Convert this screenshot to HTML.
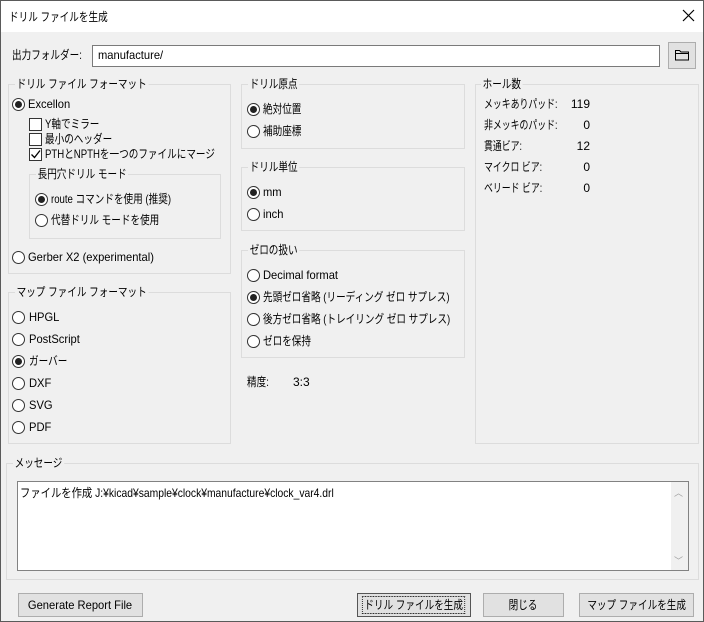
<!DOCTYPE html>
<html><head><meta charset="utf-8"><style>
*{box-sizing:border-box;margin:0;padding:0}
body{width:704px;height:622px;background:#f0f0f0;font-family:"Liberation Sans","Noto Sans CJK JP",sans-serif;font-size:12px;color:#000;position:relative;overflow:hidden;border:1px solid #5a5a5a}
.a{position:absolute;white-space:nowrap;line-height:14px}
.s{transform:scaleX(.8);transform-origin:0 0}
.l{transform:scaleX(.93);transform-origin:0 0}
.title{position:absolute;left:0;top:0;width:702px;height:31px;background:#fff}
.g{position:absolute;border:1px solid #dcdcdc}
.gl{position:absolute;background:#f0f0f0;padding:0 2px;line-height:14px;top:-8px;left:6px;white-space:nowrap;transform:scaleX(.8);transform-origin:0 0}
.r{position:absolute;width:13px;height:13px;border:1px solid #333;border-radius:50%;background:#fff}
.r.on::after{content:"";position:absolute;left:2px;top:2px;width:7px;height:7px;border-radius:50%;background:#222}
.c{position:absolute;width:13px;height:13px;border:1px solid #333;background:#fff}
.btn{position:absolute;height:24px;background:#e1e1e1;border:1px solid #adadad;text-align:center;line-height:22px;white-space:nowrap}
.btn span{display:inline-block;transform:scaleX(.8);margin:0 -30px}
</style></head><body>
<div class="title"></div>
<div class="a s" style="left:8px;top:9px">ドリル ファイルを生成</div>
<svg class="a" style="left:681px;top:8px" width="13" height="13"><path d="M1 1L12 12M12 1L1 12" stroke="#000" stroke-width="1.2"/></svg>

<div class="a s" style="left:11px;top:47px">出力フォルダー:</div>
<div style="position:absolute;left:91px;top:44px;width:568px;height:22px;background:#fff;border:1px solid #7a7a7a"></div>
<div class="a l" style="left:97px;top:47px">manufacture/</div>
<div class="btn" style="left:667px;top:41px;width:28px;height:27px"></div>
<svg class="a" style="left:673px;top:47px" width="16" height="14"><path d="M1.5 2.5h4l1.5 1.5h7.5v8h-13z M1.5 5.5h13" fill="none" stroke="#000"/></svg>

<div class="g" style="left:7px;top:83px;width:223px;height:190px"><div class="gl">ドリル ファイル フォーマット</div></div>
<div class="r on" style="left:11px;top:97px"></div><div class="a l" style="left:27px;top:96px">Excellon</div>
<div class="c" style="left:28px;top:117px"></div><div class="a s" style="left:44px;top:116px">Y軸でミラー</div>
<div class="c" style="left:28px;top:132px"></div><div class="a s" style="left:44px;top:131px">最小のヘッダー</div>
<div class="c" style="left:28px;top:147px"></div><svg class="a" style="left:29px;top:148px" width="11" height="11"><path d="M1.5 5.5l3 3 5.5-7" fill="none" stroke="#000" stroke-width="1.3"/></svg><div class="a s" style="left:44px;top:146px">PTHとNPTHを一つのファイルにマージ</div>
<div class="g" style="left:28px;top:173px;width:192px;height:65px"><div class="gl">長円穴ドリル モード</div></div>
<div class="r on" style="left:34px;top:192px"></div><div class="a s" style="left:50px;top:191px">route コマンドを使用 (推奨)</div>
<div class="r" style="left:34px;top:213px"></div><div class="a s" style="left:50px;top:212px">代替ドリル モードを使用</div>
<div class="r" style="left:11px;top:250px"></div><div class="a l" style="left:27px;top:249px">Gerber X2 (experimental)</div>

<div class="g" style="left:7px;top:291px;width:223px;height:152px"><div class="gl">マップ ファイル フォーマット</div></div>
<div class="r" style="left:11px;top:310px"></div><div class="a l" style="left:28px;top:309px">HPGL</div>
<div class="r" style="left:11px;top:332px"></div><div class="a l" style="left:28px;top:331px">PostScript</div>
<div class="r on" style="left:11px;top:354px"></div><div class="a s" style="left:28px;top:353px">ガーバー</div>
<div class="r" style="left:11px;top:376px"></div><div class="a l" style="left:28px;top:375px">DXF</div>
<div class="r" style="left:11px;top:398px"></div><div class="a l" style="left:28px;top:397px">SVG</div>
<div class="r" style="left:11px;top:420px"></div><div class="a l" style="left:28px;top:419px">PDF</div>

<div class="g" style="left:240px;top:83px;width:224px;height:65px"><div class="gl">ドリル原点</div></div>
<div class="r on" style="left:246px;top:102px"></div><div class="a s" style="left:262px;top:101px">絶対位置</div>
<div class="r" style="left:246px;top:124px"></div><div class="a s" style="left:262px;top:123px">補助座標</div>
<div class="g" style="left:240px;top:166px;width:224px;height:64px"><div class="gl">ドリル単位</div></div>
<div class="r on" style="left:246px;top:185px"></div><div class="a l" style="left:262px;top:184px">mm</div>
<div class="r" style="left:246px;top:207px"></div><div class="a l" style="left:262px;top:206px">inch</div>
<div class="g" style="left:240px;top:249px;width:224px;height:108px"><div class="gl">ゼロの扱い</div></div>
<div class="r" style="left:246px;top:268px"></div><div class="a l" style="left:262px;top:267px">Decimal format</div>
<div class="r on" style="left:246px;top:290px"></div><div class="a s" style="left:262px;top:289px">先頭ゼロ省略 (リーディング ゼロ サプレス)</div>
<div class="r" style="left:246px;top:312px"></div><div class="a s" style="left:262px;top:311px">後方ゼロ省略 (トレイリング ゼロ サプレス)</div>
<div class="r" style="left:246px;top:334px"></div><div class="a s" style="left:262px;top:333px">ゼロを保持</div>
<div class="a s" style="left:246px;top:374px">精度:</div><div class="a" style="left:292px;top:374px">3:3</div>

<div class="g" style="left:474px;top:83px;width:224px;height:360px"><div class="gl" style="left:5px">ホール数</div></div>
<div class="a s" style="left:483px;top:96px;transform:scaleX(.74)">メッキありパッド:</div><div class="a" style="left:560px;top:96px;width:29px;text-align:right">119</div>
<div class="a s" style="left:483px;top:117px;transform:scaleX(.74)">非メッキのパッド:</div><div class="a" style="left:560px;top:117px;width:29px;text-align:right">0</div>
<div class="a s" style="left:483px;top:138px;transform:scaleX(.74)">貫通ビア:</div><div class="a" style="left:560px;top:138px;width:29px;text-align:right">12</div>
<div class="a s" style="left:483px;top:159px;transform:scaleX(.74)">マイクロ ビア:</div><div class="a" style="left:560px;top:159px;width:29px;text-align:right">0</div>
<div class="a s" style="left:483px;top:180px;transform:scaleX(.74)">ベリード ビア:</div><div class="a" style="left:560px;top:180px;width:29px;text-align:right">0</div>

<div class="g" style="left:5px;top:462px;width:693px;height:117px"><div class="gl">メッセージ</div></div>
<div style="position:absolute;left:16px;top:480px;width:672px;height:90px;background:#fff;border:1px solid #828282"></div>
<div style="position:absolute;left:670px;top:481px;width:17px;height:88px;background:#f0f0f0"></div>
<div class="a" style="left:673px;top:485px;color:#a0a0a0;font-size:9px">︿</div>
<div class="a" style="left:673px;top:553px;color:#a0a0a0;font-size:9px">﹀</div>
<div class="a s" style="left:19px;top:485px;transform:scaleX(.86)">ファイルを作成 J:¥kicad¥sample¥clock¥manufacture¥clock_var4.drl</div>

<div class="btn" style="left:17px;top:592px;width:125px"><span style="transform:scaleX(.93)">Generate Report File</span></div>
<div class="btn" style="left:356px;top:592px;width:114px;border-color:#555"><span style="outline:1px dotted #000;padding:0 2px;line-height:16px">ドリル ファイルを生成</span></div>
<div class="btn" style="left:482px;top:592px;width:81px"><span>閉じる</span></div>
<div class="btn" style="left:578px;top:592px;width:115px"><span>マップ ファイルを生成</span></div>
</body></html>
